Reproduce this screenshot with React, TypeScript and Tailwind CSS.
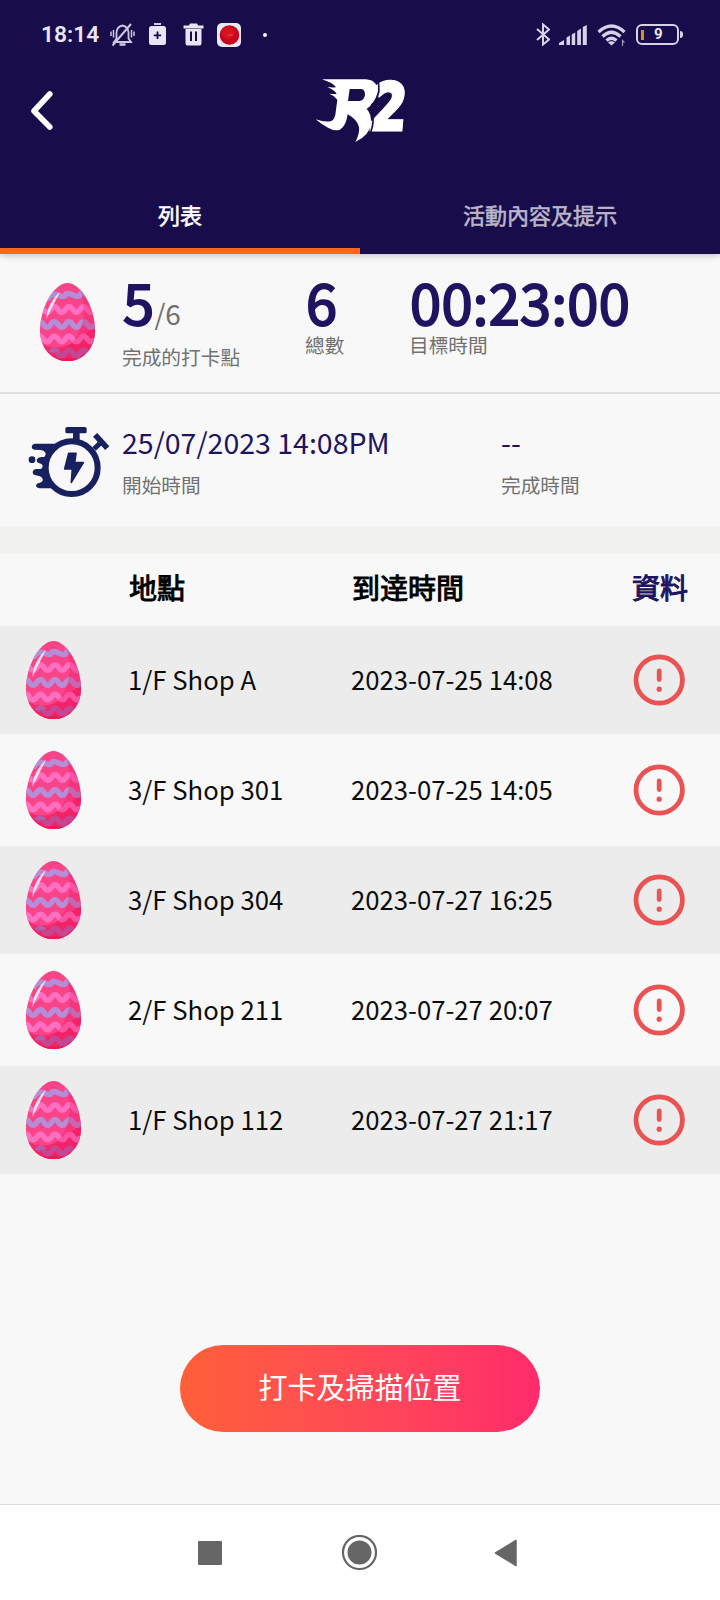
const checkpoints = [
  { name: '1/F Shop A', time: '2023-07-25 14:08' },
  { name: '3/F Shop 301', time: '2023-07-25 14:05' },
  { name: '3/F Shop 304', time: '2023-07-27 16:25' },
  { name: '2/F Shop 211', time: '2023-07-27 20:07' },
  { name: '1/F Shop 112', time: '2023-07-27 21:17' },
];

const EggIcon = ({ id }: { id: string }) => (
  <svg width="55" height="78" viewBox="0 0 55 78" className="flex-shrink-0">
    <defs>
      <clipPath id={id}>
        <path d="M27.5 0C41 0 55 25 55 47.5C55 65 43.5 78 27.5 78C11.5 78 0 65 0 47.5C0 25 14 0 27.5 0Z" />
      </clipPath>
    </defs>
    <g clipPath={`url(#${id})`}>
      <rect width="55" height="78" fill="#f9448a" />
      <path d="M0 60Q14 68 28 62T55 42V78H0Z" fill="#f52a6c" />
      <g fill="none" strokeWidth="5.4">
        <path d="M7 17Q12 9 18.100 12t7.300 0t7.300 0t7.300 0t7.300 0" stroke="#b48fd8" />
        <path d="M-3.800 26.500q3.650 -5.500 7.300 0t7.300 0t7.300 0t7.300 0t7.300 0t7.300 0t7.300 0t7.300 0" stroke="#ff70c3" />
        <path d="M-3.800 41.500q3.650 -5.500 7.300 0t7.300 0t7.300 0t7.300 0t7.300 0t7.300 0t7.300 0t7.300 0" stroke="#b48fd8" />
        <path d="M-3.800 56q3.650 -5.500 7.300 0t7.300 0t7.300 0t7.300 0t7.300 0t7.300 0t7.300 0t7.300 0" stroke="#ff70c3" />
        <path d="M10.800 70q3.650 -5.500 7.300 0t7.300 0t7.300 0t7.300 0t7.300 0" stroke="#b060ae" />
      </g>
      <path d="M40 6Q49 30 37 53Q25 73 6 68L12 78H55V0Z" fill="#ee1058" opacity="0.3" />
      <path d="M18 75.500H38V78H18Z" fill="#ee1850" />
    </g>
    <path d="M20 9C13 15 7 24 6.500 36C10 28 15 19 20 9Z" fill="#fff" opacity="0.8" />
  </svg>
);

const AlertIcon = () => (
  <svg width="52" height="52" viewBox="0 0 52 52" fill="none" stroke="#e95354" strokeLinecap="round">
    <circle cx="26.200" cy="26" r="23.200" strokeWidth="4.800" />
    <path d="M26.200 17V25.500" strokeWidth="4.800" />
    <circle cx="26.200" cy="35.200" r="2.600" fill="#e95354" stroke="none" />
  </svg>
);

const StopwatchIcon = () => (
  <svg width="100" height="90" viewBox="0 0 300 270" fill="#17215f" className="flex-shrink-0">
    <rect x="136" y="36" width="64" height="19" rx="5" />
    <path d="M159 50H179V80H159Z" />
    <path d="M231 66L256 93" stroke="#17215f" strokeWidth="17" strokeLinecap="square" strokeLinejoin="round" />
    <path d="M243 82L222 102" stroke="#17215f" strokeWidth="15" />
    <path d="M44 86H130L92 118L76 184L104 218L92 220H58Q48 218 48 211Q50 204 60 203Q70 200 68 192Q66 185 57 183L44 180Q37 178 38 170Q40 163 48 162H62Q70 158 68 151Q64 145 56 144Q49 141 50 134Q54 126 64 126H72Q80 121 76 113Q72 106 62 105L43 104Q35 102 35 95Q36 87 44 86Z" />
    <ellipse cx="155" cy="158" rx="78" ry="79" fill="#f8f8f8" stroke="#17215f" strokeWidth="18" />
    <circle cx="36" cy="134" r="10" />
    <path d="M146 115H168L164 143H190L154 202L157 162H134Z" stroke="#17215f" strokeWidth="5" strokeLinejoin="round" />
  </svg>
);

const Logo = () => (
  <svg width="120" height="90" viewBox="0 0 360 270" fill="#fff">
    {/* winged runner mark */}
    <path
      fillRule="evenodd"
      d="M66 43H198Q232 46 233 78Q230 112 200 132Q214 144 213 176Q209 210 166 231Q180 204 177 186Q172 164 143 148Q138 184 120 194Q104 200 84 188Q64 178 47 163Q78 173 94 168Q106 162 107 142L112 104Q104 92 88 86Q100 88 110 87Q106 76 82 66Q94 68 108 67Q100 54 66 43ZM149 72L144 108H180Q192 106 195 90Q195 74 184 72Z"
    />
    <text
      x="222"
      y="199"
      fontFamily="Open Sans, sans-serif"
      fontWeight="800"
      fontSize="210"
      textLength="108"
      lengthAdjust="spacingAndGlyphs"
      stroke="#fff"
      strokeWidth="3"
      transform="skewX(-5)"
    >
      2
    </text>
    <path d="M232 42Q246 82 222 112Q206 124 216 146Q224 170 212 202" fill="none" stroke="#190c4a" strokeWidth="5" />
  </svg>
);

const StatusBar = () => (
  <div className="flex h-[65px] items-center pt-[4px] pl-[41px] pr-[37px]">
    <span className="w-[69px] pt-[2px] font-[Roboto] text-[22.800px] leading-none font-semibold text-[#e9e5f3]">18:14</span>
    <svg width="25" height="24" viewBox="0 0 25 24" fill="none" stroke="#cfc8e2" strokeWidth="1.800">
      <path d="M4 19H21L18.500 15.500V9.500Q18 3.500 12.500 2.500Q7 3.500 6.500 9.500V15.500Z" />
      <path d="M2.500 22.500L21 1" strokeWidth="2" />
      <path d="M1 8.500V13M3.500 7V14.500M21.500 7V14.500M24 8.500V13" strokeWidth="1.500" />
      <path d="M9.500 21.500H15.500" strokeWidth="2.500" />
    </svg>
    <svg width="17" height="23" viewBox="0 0 17 23" className="ml-[14px]">
      <path d="M5 1H12" stroke="#e9e5f3" strokeWidth="1.800" />
      <rect y="3" width="17" height="19" rx="2.500" fill="#e9e5f3" />
      <path d="M8.500 8.500V16M4.800 12.300H12.200" stroke="#190c4a" strokeWidth="1.800" />
    </svg>
    <svg width="21" height="23" viewBox="0 0 21 23" className="ml-[17px]">
      <path d="M7 0.500H14L15 2.500H20.500V5.500H0.500V2.500H6ZM2.500 6H18.500V20.500Q18.500 22.500 16.500 22.500H4.500Q2.500 22.500 2.500 20.500Z" fill="#e9e5f3" />
      <path d="M8 8.500V18M13 8.500V18" stroke="#190c4a" strokeWidth="2" />
    </svg>
    <svg width="24" height="24" viewBox="0 0 24 24" className="ml-[13px]">
      <rect width="24" height="24" rx="5" fill="#e8e8f0" />
      <circle cx="12.500" cy="12" r="9.800" fill="#c8071c" />
      <circle cx="11" cy="10" r="6" fill="#d8121f" />
      <path d="M11 12H16" stroke="#ee6a6c" strokeWidth="0.800" />
    </svg>
    <span className="ml-[22px] size-1 rounded-full bg-white" />

    <div className="ml-auto flex items-center">
      <svg width="14" height="23" viewBox="0 0 14 23" fill="none" stroke="#d8d2e8" strokeWidth="2">
        <path d="M1 6L13 16.500L7 21.500V1.500L13 6.500L1 17" />
      </svg>
      <svg width="28" height="20" viewBox="0 0 28 20" fill="#d8d2e8" className="ml-[9px]">
        <path d="M0 20V18L5 15V20ZM7.500 20V12.500L11 10.500V20ZM12.700 20V9.500L16.200 7.500V20ZM18.200 20V6L21.900 3.500V20ZM23.800 20V2L27.800 0V20Z" />
      </svg>
      <svg width="30" height="22" viewBox="0 0 30 22" fill="none" stroke="#d8d2e8" className="ml-[10px]">
        <path d="M1.500 8Q14.500 -4 27.500 8" strokeWidth="3.200" />
        <path d="M5.500 12.500Q14.500 4 23.500 12.500" strokeWidth="3.200" />
        <path d="M9.500 16.500Q14.500 12 19.500 16.500" strokeWidth="3.200" />
        <path d="M11 18.500Q14.500 16 18 18.500L14.500 21.500Z" fill="#d8d2e8" stroke="none" />
        <path d="M25.500 22V16.500L27.500 18.500" strokeWidth="1.200" opacity="0.700" />
      </svg>
      <div className="ml-[9px] flex h-[21px] w-[43px] items-center rounded-[6px] border-[2.5px] border-[#d8d2e8] pl-[3px]">
        <span className="h-[10px] w-[3px] bg-[#d98c2a]" />
        <span className="ml-[10px] font-[Roboto] text-[15px] leading-none font-bold text-[#e9e5f3]">9</span>
      </div>
      <span className="ml-px h-[7px] w-[3px] rounded-r-sm bg-[#d8d2e8]" />
    </div>
  </div>
);

const Header = () => (
  <header className="relative z-10 h-[254px] bg-[#190c4a] shadow-[0_1px_7px_rgba(0,0,0,0.25)]">
    <StatusBar />
    <div className="grid h-[90px] grid-cols-[1fr_120px_1fr] items-center">
      <button className="ml-[29px] w-6">
        <svg width="24" height="40" viewBox="0 0 24 40" fill="none" stroke="#fff" strokeWidth="5.600" strokeLinecap="round" strokeLinejoin="round">
          <path d="M20.800 4L5 21L20.800 37" />
        </svg>
      </button>
      <Logo />
    </div>
    <nav className="grid h-[99px] grid-cols-2 text-center text-[22px] text-white">
      <button className="border-b-[6px] border-[#ff641f] pt-[26px] [-webkit-text-stroke:0.6px]">列表</button>
      <button className="border-b-[6px] border-transparent pt-[26px] text-[#bab5cb] [-webkit-text-stroke:0.6px]">
        活動內容及提示
      </button>
    </nav>
  </header>
);

const Label = ({ children }: { children: string }) => (
  <p className="text-[19.700px] leading-[24px] text-[#717171]">{children}</p>
);

const Figure = ({ children }: { children: string }) => (
  <span className="text-[56px] leading-[56px] tracking-[0.3px] [-webkit-text-stroke:2px]">{children}</span>
);

const Summary = () => (
  <section className="flex h-[140px] border-b-2 border-[#dfdfe0] pt-[19px] pl-[40px] text-[#20135f]">
    <div className="w-[82px] pt-[10px]">
      <EggIcon id="egg-summary" />
    </div>
    <div className="w-[183px]">
      <p className="ml-px h-14 leading-[56px]">
        <Figure>5</Figure>
        <span className="text-[28px] text-[#717171]">/6</span>
      </p>
      <div className="pt-[16px]">
        <Label>完成的打卡點</Label>
      </div>
    </div>
    <div className="w-[104px]">
      <p className="ml-px h-14 leading-[56px]">
        <Figure>6</Figure>
      </p>
      <div className="pt-[4px]">
        <Label>總數</Label>
      </div>
    </div>
    <div>
      <p className="ml-px h-14 leading-[56px]">
        <Figure>00:23:00</Figure>
      </p>
      <div className="pt-[4px]">
        <Label>目標時間</Label>
      </div>
    </div>
  </section>
);

const Times = () => (
  <section className="flex h-[132px] pt-[21px] pl-5 text-[#20135f]">
    <StopwatchIcon />
    <div className="ml-[2px] w-[379px] pt-[11px]">
      <p className="text-[28.500px] leading-[32px]">25/07/2023 14:08PM</p>
      <div className="pt-[15px]">
        <Label>開始時間</Label>
      </div>
    </div>
    <div className="pt-[11px]">
      <p className="text-[28.500px] leading-[32px]">--</p>
      <div className="pt-[15px]">
        <Label>完成時間</Label>
      </div>
    </div>
  </section>
);

export default function App() {
  return (
    <div className="flex h-[1600px] w-[720px] flex-col overflow-hidden bg-[#f8f8f8] font-['Noto_Sans_CJK_TC',sans-serif]">
      <Header />
      <Summary />
      <Times />
      <div className="h-7 bg-[#f1f1f0]" />

      {/* Checkpoint table */}
      <div className="grid h-[72px] grid-cols-[129px_223px_280px_1fr] items-center pb-[6px] text-[28px] leading-none text-black [-webkit-text-stroke:1px]">
        <span />
        <span>地點</span>
        <span>到逹時間</span>
        <span className="text-[#20135f]">資料</span>
      </div>
      <div className="flex flex-col gap-[2px]">
        {checkpoints.map((item, i) => (
          <div
            key={item.name}
            className="grid h-[108px] grid-cols-[128px_223px_282px_1fr] items-center text-[25.700px] leading-none text-[#0c0c0c] odd:bg-[#ececec]"
          >
            <span className="pl-[26px]">
              <EggIcon id={`egg-${i}`} />
            </span>
            <span className="pb-[2px]">{item.name}</span>
            <span className="pb-[2px]">{item.time}</span>
            <AlertIcon />
          </div>
        ))}
      </div>

      <button className="mx-auto mt-auto mb-[72px] h-[87px] w-[360px] rounded-full bg-linear-to-r from-[#ff5f38] to-[#ff2a6b] pb-[4px] text-[29px] leading-none text-white">
        打卡及掃描位置
      </button>

      {/* Android navigation */}
      <footer className="grid h-24 grid-cols-[198px_144px_152px_1fr] items-center border-t border-[#dedede] bg-white">
        <span />
        <span className="size-6 rounded-[1px] bg-[#666]" />
        <svg width="36" height="36" viewBox="0 0 36 36">
          <circle cx="17.500" cy="17.500" r="16.500" fill="none" stroke="#666" strokeWidth="2.200" />
          <circle cx="17.500" cy="17.500" r="12" fill="#666" />
        </svg>
        <svg width="24" height="28" viewBox="0 0 24 28">
          <path d="M22 1.500V26.500L1.500 14Z" fill="#666" stroke="#666" strokeWidth="1.500" strokeLinejoin="round" />
        </svg>
      </footer>
    </div>
  );
}
